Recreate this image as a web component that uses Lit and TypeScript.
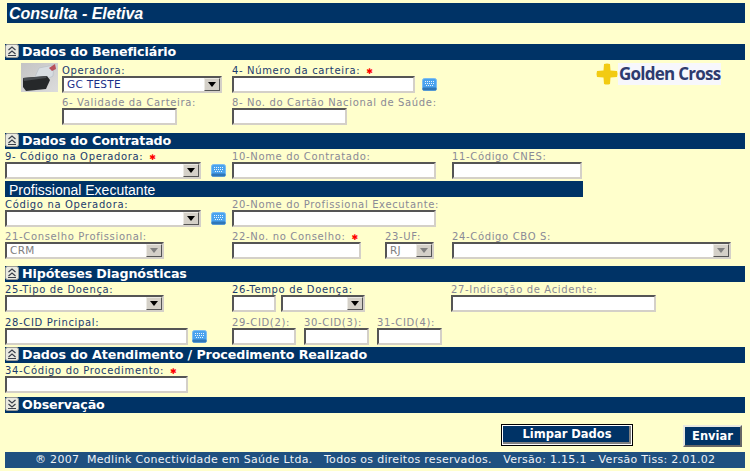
import { LitElement, html, css, svg } from "lit";
import { customElement } from "lit/decorators.js";

type Field = {
  label: string; w: number; at: number; kind?: "input" | "select" | "none";
  off?: boolean; req?: boolean; value?: string; kb?: number; gray?: boolean; noLabel?: boolean;
};

const chevrons = (down: boolean) => svg`<svg class="toggle" width="14" height="14" viewBox="0 0 14 14">
  <rect x="0.5" y="0.5" width="13" height="13" rx="2" fill="#e9e9e0" stroke="#9a9a96"/>
  <path d="${down ? "M3.500 3 7 6 10.500 3M3.500 7 7 10 10.500 7M3 11.500h8" : "M3.500 6 7 3 10.500 6M3.500 10 7 7 10.500 10M3 11.500h8"}" fill="none" stroke="#3a3f4a" stroke-width="1.200"/>
</svg>`;

const keyboard = svg`<svg class="kb" width="15" height="13" viewBox="0 0 15 13">
  <rect x="0.5" y="0.5" width="14" height="12" rx="2" fill="#4aa3ee" stroke="#7dbdf0"/>
  <rect x="0.5" y="9.5" width="14" height="3" rx="1" fill="#2f77b8"/>
  <path d="M3 3.500h9M3 5.500h9M4 7.500h7" stroke="#e6f3fd" stroke-width="1" stroke-dasharray="1 1"/>
</svg>`;

const reader = svg`<svg class="reader" width="37" height="29" viewBox="0 0 37 29">
  <defs><linearGradient id="rb" x1="0" y1="0" x2="1" y2="1"><stop offset="0" stop-color="#c4c4c4"/><stop offset="1" stop-color="#dcdcdc"/></linearGradient></defs>
  <rect width="37" height="29" fill="url(#rb)"/>
  <path d="M14 14 18 5 33 2 32 13 26 16Z" fill="#d8dde2" stroke="#b4bcc4" stroke-width=".6"/>
  <path d="M28 5 34 1 35 6 31 8Z" fill="#b8505a"/>
  <path d="M2 15 26 13 29 17 25 26 5 28 2 24Z" fill="#26282a"/>
  <path d="M2 15 26 13 25 15 3 18Z" fill="#484c50"/>
</svg>`;

const logoCross = svg`<svg width="22" height="22" viewBox="0 0 22 22">
  <path d="M8 1Q11 0 14 1L14.500 7.500 21 8Q22 11 21 14L14.500 14.500 14 21Q11 22 8 21L7.500 14.500 1 14Q0 11 1 8L7.500 7.500Z" fill="#f2cb12"/>
</svg>`;

@customElement("app-root")
export class AppRoot extends LitElement {
  static styles = css`
    :host { display: block; width: 750px; height: 471px; background: #ffffcc; overflow: hidden; font-family: "DejaVu Sans", Verdana, sans-serif; }
    .page { display: flex; flex-direction: column; width: 740px; padding: 3px 0 0 5px; }
    .title { height: 20px; margin-left: 2px; margin-bottom: 21px; background: #003366; color: #fff; font: italic bold 16px/21px "Liberation Sans", Arial, sans-serif; padding-left: 2px; text-shadow: 1px 1px 0 #16406a; }
    .bar { display: flex; align-items: center; flex: none; height: 16px; background: #003366; color: #fff; font-size: 12.7px; letter-spacing: -0.12px; font-weight: bold; line-height: 18px; }
    .toggle { flex: none; margin: 0 3px 2px 0; }
    .sub { flex: none; box-sizing: border-box; width: 578px; height: 16px; padding-left: 4px; background: #003366; color: #fff; font: 14px/18px "Liberation Sans", Arial, sans-serif; margin-top: 2px; }
    .row { box-sizing: border-box; flex: none; display: flex; }
    .field { display: flex; flex-direction: column; flex: none; }
    .label { font-size: 10px; line-height: 14px; height: 12px; letter-spacing: 0.65px; color: #1b3b6e; white-space: nowrap; }
    .label.off { color: #8a8a96; }
    .label i { color: #f00; font-style: normal; margin-left: 6px; font-size: 8px; letter-spacing: 0; }
    .control { display: block; box-sizing: border-box; height: 17px; background: #fff; border: 2px solid; border-color: #555 #d4d0c8 #d4d0c8 #555; font-size: 10.5px; line-height: 13px; color: #1b2f88; padding-left: 3px; position: relative; letter-spacing: 0.3px; }
    .control.gray { color: #808080; }
    .drop { position: absolute; right: 0; top: 0; width: 16px; height: 13px; box-sizing: border-box; background: #d4d0c8; border: 1px solid; border-color: #eceae4 #555 #555 #eceae4; display: flex; align-items: center; justify-content: center; }
    .drop::after { content: ""; border: 4px solid transparent; border-top: 5px solid #000; border-bottom: 0; border-left-width: 4.5px; border-right-width: 4.5px; }
    .drop.off::after { border-top-color: #808080; }
    .reader { position: absolute; left: 16px; top: 3px; }
    .logo { position: absolute; left: 591px; top: 3px; width: 125px; height: 22px; display: flex; align-items: center; background: #f7f7fc; }
    .logo svg { margin-right: 1px; background: #ffffcc; flex: none; }
    .logo span { font: bold 17px/22px "Open Sans", sans-serif; letter-spacing: -0.75px; color: #2e3b6e; white-space: nowrap; }
    .s1 { flex: none; height: 73px; display: block; position: relative; }
    .actions { flex: none; display: flex; align-items: flex-start; height: 39px; }
    .btn { box-sizing: border-box; display: flex; align-items: center; justify-content: center; background: #003366; color: #fff; font: bold 11.5px "DejaVu Sans", Verdana, sans-serif; }
    .limpar { width: 132px; height: 22px; margin: 11px 0 0 496px; padding-bottom: 2px; border: 1px solid #000; box-shadow: inset 0 0 0 1px #fff, inset -1px -1px 0 2px #808080; }
    .enviar { width: 59px; height: 22px; margin: 12px 0 0 50px; border: 2px solid; border-color: #e8e8e0 #666 #666 #e8e8e0; }
    .footer { flex: none; height: 16px; background: #1f5080; color: #eef2f6; font-size: 11px; line-height: 16px; padding-left: 30px; white-space: pre; letter-spacing: 0.3px; }
  `;

  private field(f: Field, prevEnd: number) {
    const kind = f.kind ?? "input";
    return html`<div class="field" style="margin-left:${f.at - prevEnd}px;width:${f.w}px">
      <div class="label ${f.off ? "off" : ""}">${f.noLabel ? "" : f.label}${f.req ? html`<i>✱</i>` : ""}</div>
      <div class="control ${f.gray ? "gray" : ""}" style="width:${f.w}px">${f.value ?? ""}${kind === "select" ? html`<span class="drop ${f.gray ? "off" : ""}"></span>` : ""}</div>
    </div>`;
  }

  private row(fields: Field[], top: number, h: number) {
    let end = 5;
    return html`<div class="row" style="height:${h}px;padding-top:${top}px">
      ${fields.map((f) => {
        const t = this.field(f, end);
        end = f.at + f.w;
        const kb = f.kb;
        if (kb !== undefined) {
          const icon = html`<div class="field" style="margin-left:${kb - end}px;width:15px;padding-top:14px">${keyboard}</div>`;
          end = kb + 15;
          return html`${t}${icon}`;
        }
        return t;
      })}
    </div>`;
  }

  private bar(text: string, down = false) {
    return html`<div class="bar">${chevrons(down)}<span>${text}</span></div>`;
  }

  render() {
    return html`<div class="page">
      <div class="title">Consulta - Eletiva</div>

      ${this.bar("Dados do Beneficiário")}
      <div class="s1">
        ${reader}
        <div class="logo">${logoCross}<span>Golden Cross</span></div>
        ${this.row([
          { label: "Operadora:", at: 62, w: 160, kind: "select", value: "GC TESTE" },
          { label: "4- Número da carteira:", at: 232, w: 183, req: true, kb: 422 },
        ], 4, 36)}
        ${this.row([
          { label: "6- Validade da Carteira:", at: 62, w: 115, off: true },
          { label: "8- No. do Cartão Nacional de Saúde:", at: 232, w: 115, off: true },
        ], 0, 29)}
      </div>

      ${this.bar("Dados do Contratado")}
      ${this.row([
        { label: "9- Código na Operadora:", at: 5, w: 196, kind: "select", req: true, kb: 211 },
        { label: "10-Nome do Contratado:", at: 232, w: 204, off: true },
        { label: "11-Código CNES:", at: 452, w: 130, off: true },
      ], 1, 30)}
      <div class="sub">Profissional Executante</div>
      ${this.row([
        { label: "Código na Operadora:", at: 5, w: 196, kind: "select", kb: 211 },
        { label: "20-Nome do Profissional Executante:", at: 232, w: 204, off: true },
      ], 1, 30)}
      ${this.row([
        { label: "21-Conselho Profissional:", at: 5, w: 159, kind: "select", off: true, gray: true, value: "CRM" },
        { label: "22-No. no Conselho:", at: 232, w: 129, off: true, req: true },
        { label: "23-UF:", at: 385, w: 49, kind: "select", off: true, gray: true, value: "RJ" },
        { label: "24-Código CBO S:", at: 452, w: 279, kind: "select", off: true, gray: true },
      ], 3, 39)}

      ${this.bar("Hipóteses Diagnósticas")}
      ${this.row([
        { label: "25-Tipo de Doença:", at: 5, w: 159, kind: "select" },
        { label: "26-Tempo de Doença:", at: 232, w: 44 },
        { label: "", noLabel: true, at: 281, w: 84, kind: "select" },
        { label: "27-Indicação de Acidente:", at: 451, w: 205, off: true },
      ], 1, 30)}
      ${this.row([
        { label: "28-CID Principal:", at: 5, w: 183, kb: 192 },
        { label: "29-CID(2):", at: 232, w: 64, off: true },
        { label: "30-CID(3):", at: 304, w: 65, off: true },
        { label: "31-CID(4):", at: 377, w: 65, off: true },
      ], 4, 35)}

      ${this.bar("Dados do Atendimento / Procedimento Realizado")}
      ${this.row([{ label: "34-Código do Procedimento:", at: 5, w: 183, req: true }], 1, 34)}

      ${this.bar("Observação", true)}
      <div class="actions">
        <div class="btn limpar">Limpar Dados</div>
        <div class="btn enviar">Enviar</div>
      </div>
      <div class="footer">® 2007  Medlink Conectividade em Saúde Ltda.   Todos os direitos reservados.   Versão: 1.15.1 - Versão Tiss: 2.01.02</div>
    </div>`;
  }
}
